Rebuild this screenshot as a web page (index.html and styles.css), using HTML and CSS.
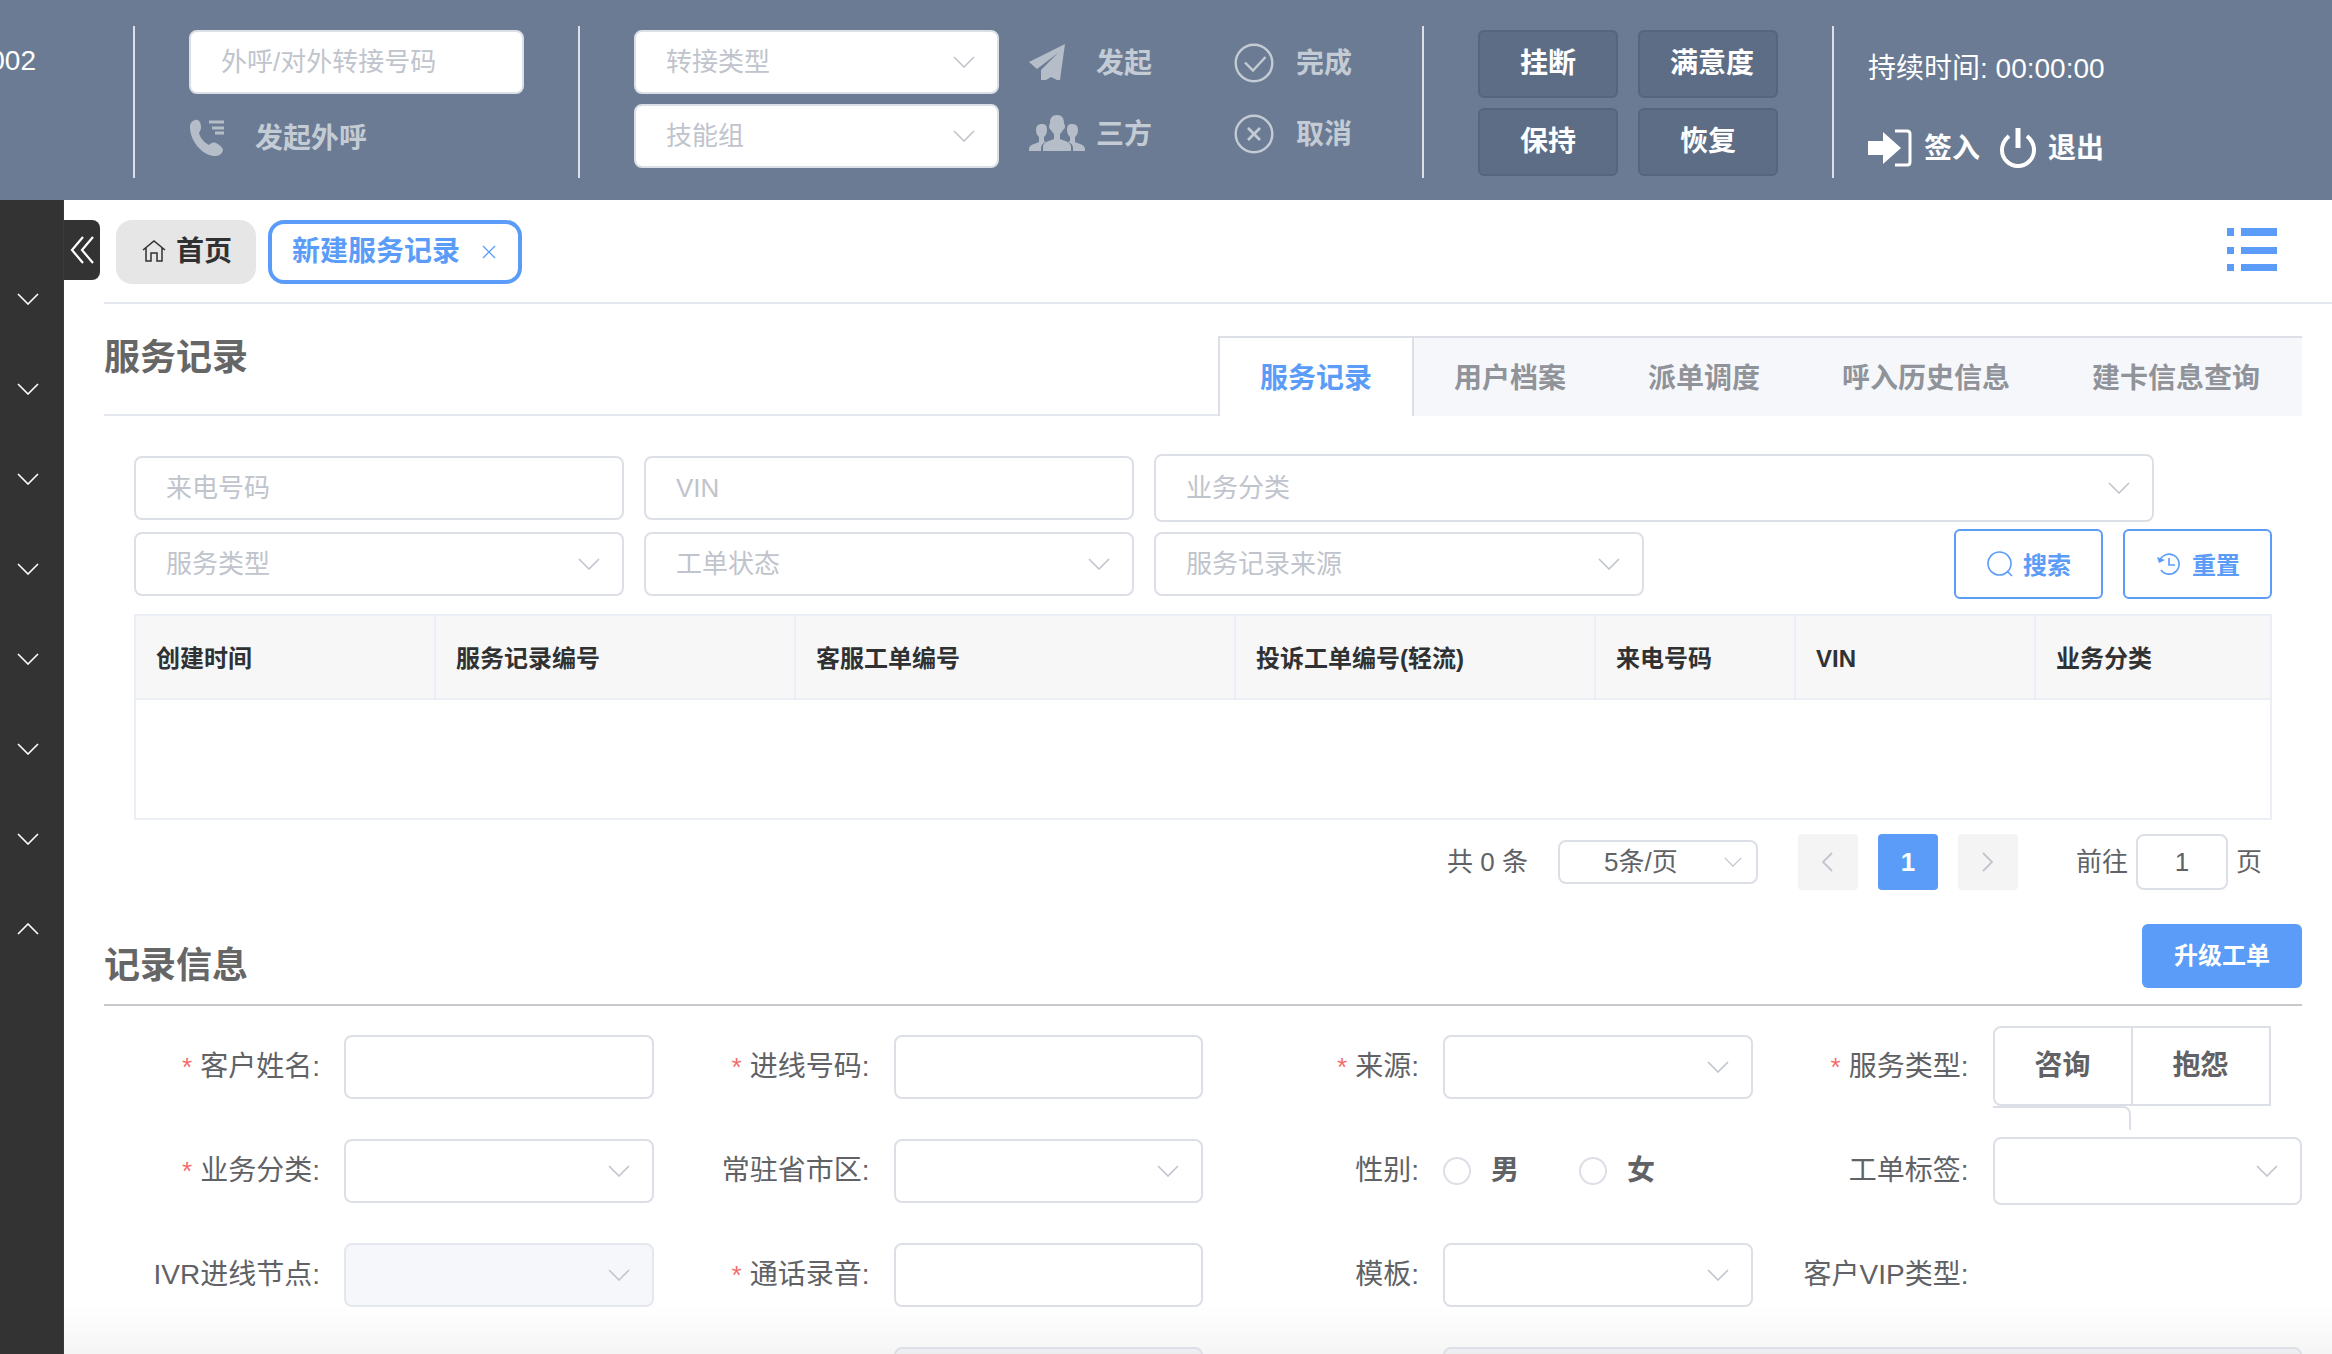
FILE: index.html
```html
<!DOCTYPE html>
<html lang="zh-CN">
<head>
<meta charset="utf-8">
<title>新建服务记录</title>
<link rel="stylesheet" href="styles.css">
</head>
<body>
<svg class="sprite" aria-hidden="true">
  <symbol id="caret" viewBox="0 0 22 12"><path d="M1 1l10 10L21 1" fill="none" stroke="currentColor" stroke-width="1.6"/></symbol>
</svg>

<header class="topbar">
  <div class="agent">002</div>
  <div class="divider"></div>
  <div class="outbound">
    <input class="field" type="text" placeholder="外呼/对外转接号码" aria-label="外呼/对外转接号码">
    <button class="action call" type="button">
      <svg width="36" height="38" viewBox="0 0 36 38"><path d="M6 1c4-1 6 3 6 7 0 3-1 4-2 6 1 5 6 10 10 12 2-2 4-3 7-2 4 2 7 5 7 7-1 5-5 6-9 6C13 36 1 22 1 8c0-4 2-6 5-7z" fill="currentColor"/><path d="M20 3h15M23 9h12M26 14h9" stroke="currentColor" stroke-width="3" fill="none"/></svg>
      <span>发起外呼</span>
    </button>
  </div>
  <div class="divider"></div>
  <div class="transfer">
    <div class="select"><select class="field placeholder" aria-label="转接类型"><option>转接类型</option></select><svg class="caret"><use href="#caret"/></svg></div>
    <div class="select"><select class="field placeholder" aria-label="技能组"><option>技能组</option></select><svg class="caret"><use href="#caret"/></svg></div>
  </div>
  <div class="actions">
    <button class="action wide" type="button">
      <svg width="56" height="40" viewBox="0 0 56 40"><path d="M36 1L31 37H28l-6-3-5 3H12V27L29 10 8 26 0 19z" fill="currentColor"/></svg>
      <span>发起</span>
    </button>
    <button class="action" type="button">
      <svg width="40" height="40" viewBox="0 0 40 40" fill="none" stroke="currentColor" stroke-width="2.4"><circle cx="20" cy="20" r="18.3"/><path d="M11 19.5l8 8L31.500 14"/></svg>
      <span>完成</span>
    </button>
    <button class="action wide" type="button">
      <svg width="56" height="40" viewBox="0 0 56 40" fill="currentColor"><path d="M28 1c5 0 7 3 7 8l1 3c0 3-1 3-2 4-1 2-2 3-3 4v5c5 2 11 3 11 8v4H14v-4c0-5 6-6 11-8v-5c-1-1-2-2-3-4-1-1-2-1-2-4l1-3c0-5 2-8 7-8z"/><path d="M13 10c4 0 5 2 5 6 0 3-1 5-3 7v4l2 1c-3 1-5 3-5 6v3H0v-2c0-4 5-5 10-7v-5c-2-2-3-4-3-7 0-4 2-6 6-6zM43 10c-4 0-5 2-5 6 0 3 1 5 3 7v4l-2 1c3 1 5 3 5 6v3h12v-2c0-4-5-5-10-7v-5c2-2 3-4 3-7 0-4-2-6-6-6z"/></svg>
      <span>三方</span>
    </button>
    <button class="action" type="button">
      <svg width="40" height="40" viewBox="0 0 40 40" fill="none" stroke="currentColor" stroke-width="2.4"><circle cx="20" cy="20" r="18.3"/><path d="M14 14l12 12M26 14L14 26" stroke-width="2.8"/></svg>
      <span>取消</span>
    </button>
  </div>
  <div class="divider"></div>
  <div class="controls">
    <button type="button">挂断</button>
    <button class="long-text" type="button">满意度</button>
    <button type="button">保持</button>
    <button type="button">恢复</button>
  </div>
  <div class="divider"></div>
  <div class="session">
    <div class="duration">持续时间: 00:00:00</div>
    <div class="session-actions">
      <button type="button">
        <svg width="44" height="40" viewBox="0 0 44 40"><path d="M0 13h15V4l18 16-18 16v-9H0z" fill="#fff"/><path d="M27 3h12q3 0 3 3v28q0 3-3 3H27" fill="none" stroke="#fff" stroke-width="3"/></svg>
        <span>签入</span>
      </button>
      <button type="button">
        <svg width="36" height="42" viewBox="0 0 36 42" fill="none" stroke="#fff"><path d="M9 9Q2 15 2 23a16 16 0 0 0 32 0q0-8-7-14" stroke-width="4"/><path d="M6 33q5 6 12 6t12-6" stroke-width="3"/><path d="M18 1v20" stroke-width="5"/></svg>
        <span>退出</span>
      </button>
    </div>
  </div>
</header>

<div class="layout">
  <nav class="sidebar" aria-label="主菜单">
    <button type="button" aria-label="展开"><svg class="caret"><use href="#caret"/></svg></button>
    <button type="button" aria-label="展开"><svg class="caret"><use href="#caret"/></svg></button>
    <button type="button" aria-label="展开"><svg class="caret"><use href="#caret"/></svg></button>
    <button type="button" aria-label="展开"><svg class="caret"><use href="#caret"/></svg></button>
    <button type="button" aria-label="展开"><svg class="caret"><use href="#caret"/></svg></button>
    <button type="button" aria-label="展开"><svg class="caret"><use href="#caret"/></svg></button>
    <button type="button" aria-label="展开"><svg class="caret"><use href="#caret"/></svg></button>
    <button type="button" aria-label="收起"><svg class="caret up"><use href="#caret"/></svg></button>
  </nav>

  <main class="main">
    <div class="tabbar">
      <button class="collapse" type="button" aria-label="收起菜单">
        <svg width="26" height="28" viewBox="0 0 26 28" fill="none" stroke="#fff" stroke-width="2.2"><path d="M14 1L3 14l11 13M24 1L13 14l11 13"/></svg>
      </button>
      <a class="tab home" href="#">
        <svg width="24" height="24" viewBox="0 0 24 24" fill="none" stroke="#303133" stroke-width="1.5"><path d="M1 10L12 1l11 9M4 8v13h5v-8h6v8h5V8"/></svg>
        <span>首页</span>
      </a>
      <a class="tab current" href="#">
        <span>新建服务记录</span>
        <svg width="14" height="14" viewBox="0 0 14 14" stroke="currentColor" stroke-width="1.3"><path d="M1 1l12 12M13 1L1 13"/></svg>
      </a>
      <button class="list" type="button" aria-label="列表">
        <svg width="50" height="44" viewBox="0 0 50 44" fill="#5a9cf8"><path d="M0 0h7v8H0zM14 0h36v8H14zM0 19h7v7H0zM14 19h36v7H14zM0 36h7v7H0zM14 36h36v7H14z"/></svg>
      </button>
    </div>

    <div class="page">
      <div class="section-head">
        <h2>服务记录</h2>
        <div class="cards" role="tablist">
          <button class="active" type="button" role="tab">服务记录</button>
          <button type="button" role="tab">用户档案</button>
          <button type="button" role="tab">派单调度</button>
          <button type="button" role="tab">呼入历史信息</button>
          <button type="button" role="tab">建卡信息查询</button>
        </div>
      </div>

      <section class="records">
        <div class="filters">
          <div class="filter-row">
            <input class="field" type="text" placeholder="来电号码" aria-label="来电号码">
            <input class="field" type="text" placeholder="VIN" aria-label="VIN">
            <div class="select long"><select class="field tall placeholder" aria-label="业务分类"><option>业务分类</option></select><svg class="caret"><use href="#caret"/></svg></div>
          </div>
          <div class="filter-row">
            <div class="select"><select class="field placeholder" aria-label="服务类型"><option>服务类型</option></select><svg class="caret"><use href="#caret"/></svg></div>
            <div class="select"><select class="field placeholder" aria-label="工单状态"><option>工单状态</option></select><svg class="caret"><use href="#caret"/></svg></div>
            <div class="select"><select class="field placeholder" aria-label="服务记录来源"><option>服务记录来源</option></select><svg class="caret"><use href="#caret"/></svg></div>
            <div class="buttons">
              <button class="outline" type="button">
                <svg width="26" height="26" viewBox="0 0 26 26" fill="none" stroke="currentColor" stroke-width="1.6"><circle cx="12.5" cy="12.5" r="11.5"/><path d="M20 20l5 5"/></svg>
                <span>搜索</span>
              </button>
              <button class="outline" type="button">
                <svg width="26" height="26" viewBox="0 0 26 26" fill="none" stroke="currentColor" stroke-width="1.6"><path d="M4 9a10 10 0 1 1 1 10M13 7v7h6"/><path d="M1 6l2 6 6-3z" fill="currentColor" stroke="none"/></svg>
                <span>重置</span>
              </button>
            </div>
          </div>
        </div>

        <table class="grid">
          <colgroup><col class="w300"><col class="w360"><col class="w440"><col class="w360"><col class="w200"><col class="w240"><col></colgroup>
          <thead><tr><th>创建时间</th><th>服务记录编号</th><th>客服工单编号</th><th>投诉工单编号(轻流)</th><th>来电号码</th><th>VIN</th><th>业务分类</th></tr></thead>
          <tbody><tr><td colspan="7"></td></tr></tbody>
        </table>

        <div class="pager">
          <span class="total">共 0 条</span>
          <div class="select"><select class="field size" aria-label="每页条数"><option>5条/页</option></select><svg class="caret"><use href="#caret"/></svg></div>
          <div class="pages">
            <button type="button" aria-label="上一页"><svg width="12" height="20" viewBox="0 0 12 20" fill="none" stroke="currentColor" stroke-width="1.8"><path d="M10 1L1 10l9 9"/></svg></button>
            <button class="on" type="button">1</button>
            <button type="button" aria-label="下一页"><svg width="12" height="20" viewBox="0 0 12 20" fill="none" stroke="currentColor" stroke-width="1.8"><path d="M1 1l9 9-9 9"/></svg></button>
          </div>
          <label class="jump">前往<input class="field" type="text" value="1">页</label>
        </div>
      </section>

      <div class="info-head">
        <h2>记录信息</h2>
        <button class="primary" type="button">升级工单</button>
      </div>

      <form class="form">
        <div class="item"><label class="required" for="name">客户姓名:</label><input class="field" id="name" type="text"></div>
        <div class="item"><label class="required" for="phone">进线号码:</label><input class="field" id="phone" type="text"></div>
        <div class="item"><label class="required" for="source">来源:</label><div class="select"><select class="field" id="source"></select><svg class="caret"><use href="#caret"/></svg></div></div>
        <div class="item"><span class="label required" id="kind">服务类型:</span>
          <div class="segmented" role="radiogroup" aria-labelledby="kind">
            <label><input type="radio" name="kind">咨询</label>
            <label><input type="radio" name="kind">抱怨</label>
            <span class="rest"></span>
          </div>
        </div>

        <div class="item"><label class="required" for="category">业务分类:</label><div class="select"><select class="field" id="category"></select><svg class="caret"><use href="#caret"/></svg></div></div>
        <div class="item"><label for="region">常驻省市区:</label><div class="select"><select class="field" id="region"></select><svg class="caret"><use href="#caret"/></svg></div></div>
        <div class="item"><span class="label" id="sex">性别:</span>
          <div class="radios" role="radiogroup" aria-labelledby="sex">
            <label><input type="radio" name="sex">男</label>
            <label><input type="radio" name="sex">女</label>
          </div>
        </div>
        <div class="item"><label for="tags">工单标签:</label><div class="select"><select class="field tall" id="tags"></select><svg class="caret"><use href="#caret"/></svg></div></div>

        <div class="item"><label for="ivr">IVR进线节点:</label><div class="select"><select class="field" id="ivr" disabled></select><svg class="caret"><use href="#caret"/></svg></div></div>
        <div class="item"><label class="required" for="audio">通话录音:</label><input class="field" id="audio" type="text"></div>
        <div class="item"><label for="template">模板:</label><div class="select"><select class="field" id="template"></select><svg class="caret"><use href="#caret"/></svg></div></div>
        <div class="item"><span class="label">客户VIP类型:</span></div>

        <div class="item second"><span class="label"></span><input class="field" type="text" disabled></div>
        <div class="item double"><span class="label"></span><input class="field" type="text" disabled></div>
      </form>
    </div>
    <div class="fade"></div>
  </main>
</div>
</body>
</html>
```
FILE: styles.css
```css
* { box-sizing: border-box; }

body {
  margin: 0;
  height: 100vh;
  display: flex;
  flex-direction: column;
  overflow: hidden;
  background: #fff;
  color: #606266;
  font: 28px/40px "Liberation Sans", "Noto Sans CJK SC", sans-serif;
}

button, input, select { font: inherit; color: inherit; margin: 0; }
button { padding: 0; border: 0; background: none; white-space: nowrap; }
a { color: inherit; text-decoration: none; }
svg { flex: none; display: block; }
h2 { margin: 0; font-size: 36px; line-height: 44px; font-weight: 700; color: #666; }
.sprite { position: absolute; width: 0; height: 0; }

/* Fields */
.field {
  width: 100%;
  min-width: 0;
  height: 64px;
  padding: 0 30px;
  border: 2px solid #dcdfe6;
  border-radius: 8px;
  background: #fff;
  color: #606266;
  font-size: 26px;
  appearance: none;
  outline: none;
}
.field.tall { height: 68px; }
.field::placeholder { color: #c0c4cc; opacity: 1; }
.field.placeholder { color: #c0c4cc; }
.field:disabled { background: #f5f7fa; border-color: #e4e7ed; opacity: 1; }
.select { display: grid; align-items: center; flex: 1; min-width: 0; }
.select > * { grid-area: 1 / 1; }
.caret { width: 22px; height: 12px; color: #c0c4cc; }
.select .caret { justify-self: end; margin-right: 24px; pointer-events: none; }

/* Top bar */
.topbar {
  flex: none;
  height: 200px;
  display: flex;
  align-items: flex-start;
  padding-top: 26px;
  background: #6b7b93;
  color: #fff;
}
.agent {
  width: 36px;
  margin: 15px 97px 0 0;
  display: flex;
  justify-content: flex-end;
  overflow: hidden;
}
.divider { flex: none; width: 2px; height: 152px; background: #dcdfe6; }
.outbound { width: 335px; margin: 4px 54px 0; display: flex; flex-direction: column; gap: 24px; }
.action { display: flex; align-items: center; gap: 22px; height: 40px; color: #c3cbd5; font-weight: 700; }
.action span, .session span { padding-top: 2px; }
.action svg { color: #b4bdc8; }
.action.call { gap: 30px; }
.action.wide { gap: 11px; }
.transfer { width: 365px; margin: 4px 0 0 54px; display: flex; flex-direction: column; gap: 10px; }
.actions {
  display: grid;
  grid-template-columns: 205px 118px;
  gap: 31px 0;
  margin: 17px 70px 0 30px;
}
.actions .action:nth-child(even) svg { color: #c3cbd5; }
.controls { display: grid; grid-template-columns: 140px 140px; gap: 10px 20px; margin: 4px 54px 0; }
.controls button {
  height: 68px;
  border: 2px solid #546580;
  border-radius: 6px;
  background: #5d6d86;
  color: #fff;
  font-weight: 700;
}
.controls .long-text { padding-left: 8px; }
.session { display: flex; flex-direction: column; gap: 39px; margin: 23px 0 0 34px; }
.session-actions { display: flex; gap: 20px; }
.session-actions button { display: flex; align-items: center; gap: 12px; height: 40px; font-weight: 700; }

/* Side menu */
.layout { flex: 1; min-height: 0; display: flex; }
.sidebar {
  flex: none;
  width: 64px;
  padding-top: 54px;
  display: flex;
  flex-direction: column;
  border-right: 1px solid #2b3a5e;
  background: #333;
}
.sidebar button { height: 90px; padding-left: 17px; }
.sidebar .caret { color: #fff; }
.up { transform: rotate(180deg); }

/* Open pages */
.main { flex: 1; min-width: 0; position: relative; overflow: hidden; }
.tabbar { display: flex; align-items: flex-start; height: 102px; padding: 20px 55px 0 0; }
.collapse {
  width: 36px;
  height: 60px;
  margin-right: 16px;
  display: flex;
  align-items: center;
  justify-content: center;
  border-radius: 0 8px 8px 0;
  background: #333;
}
.tab {
  height: 64px;
  display: flex;
  align-items: center;
  border-radius: 16px;
  font-weight: 700;
}
.home { gap: 10px; margin-right: 12px; padding: 0 24px 0 26px; background: #e6e6e6; color: #303133; }
.current { gap: 22px; padding: 0 22px 0 20px; border: 4px solid #5a9cf8; color: #5a9cf8; }
.list { margin: 8px 0 0 auto; }

/* Page */
.page { margin-left: 40px; padding-right: 30px; border-top: 2px solid #e4e7ed; }
.section-head { display: flex; padding-top: 32px; }
.section-head h2 { flex: 1; border-bottom: 2px solid #e4e7ed; }
.cards {
  display: flex;
  height: 80px;
  border-top: 2px solid #dcdfe6;
  border-left: 2px solid #dcdfe6;
  background: #f5f7fa;
}
.cards button { padding: 4px 40px 0; border-right: 2px solid transparent; color: #909399; font-weight: 700; }
.cards .active { background: #fff; border-right-color: #dcdfe6; color: #5a9cf8; }

.records { padding: 38px 30px 0; }
.filters { display: flex; flex-direction: column; gap: 7px; }
.filter-row { display: flex; align-items: center; gap: 20px; }
.filter-row > .field, .filter-row > .select { flex: 0 1 490px; }
.filter-row > .long { flex-basis: 1000px; }
.buttons { display: flex; gap: 20px; margin-left: auto; }
.outline {
  display: flex;
  align-items: center;
  gap: 10px;
  height: 70px;
  padding: 0 30px 0 31px;
  border: 2px solid #5a9cf8;
  border-radius: 6px;
  color: #5a9cf8;
  font-size: 24px;
  font-weight: 700;
}
.outline span { padding-top: 4px; }

.grid {
  width: 100%;
  margin-top: 15px;
  table-layout: fixed;
  border-collapse: separate;
  border-spacing: 0;
  border: 2px solid #ebeef5;
  border-width: 2px 0 0 2px;
}
.w200 { width: 200px; }
.w240 { width: 240px; }
.w300 { width: 300px; }
.w360 { width: 360px; }
.w440 { width: 440px; }
.grid th, .grid td { border: 2px solid #ebeef5; border-width: 0 2px 2px 0; }
.grid th {
  height: 84px;
  padding: 4px 20px 0;
  background: #f7f7f7;
  color: #303133;
  font-size: 24px;
  font-weight: 700;
  text-align: left;
}
.grid td { height: 120px; padding: 0; }

.pager {
  display: flex;
  align-items: center;
  justify-content: flex-end;
  margin-top: 14px;
  padding-right: 10px;
  font-size: 26px;
}
.pager .select { flex: none; width: 200px; margin: 0 40px 0 30px; }
.pager .size { height: 44px; padding-left: 44px; }
.pager .caret { width: 18px; height: 10px; margin-right: 16px; }
.pages { display: flex; gap: 20px; margin-right: 58px; }
.pages button {
  width: 60px;
  height: 56px;
  display: flex;
  align-items: center;
  justify-content: center;
  border-radius: 4px;
  background: #f4f4f5;
  color: #c0c4cc;
}
.pages .on { background: #5a9cf8; color: #fff; font-weight: 700; }
.jump { display: flex; align-items: center; gap: 8px; }
.jump .field { width: 92px; height: 56px; padding: 0; text-align: center; }

.info-head {
  display: flex;
  align-items: flex-start;
  justify-content: space-between;
  margin-top: 34px;
  padding-bottom: 16px;
  border-bottom: 2px solid #c8c9cc;
}
.info-head h2 { padding-top: 20px; }
.primary {
  width: 160px;
  height: 64px;
  border-radius: 6px;
  background: #5a9cf8;
  color: #fff;
  font-size: 24px;
  font-weight: 700;
}

/* Record form */
.form {
  display: grid;
  grid-template-columns: repeat(4, minmax(0, 1fr));
  grid-auto-rows: 64px;
  row-gap: 40px;
  margin-top: 29px;
}
.item { display: flex; align-items: center; }
.item > label, .label { flex: none; width: 240px; padding-right: 24px; text-align: right; white-space: nowrap; }
.required::before { content: "*"; margin-right: 8px; color: #f56c6c; font-size: 26px; }
.item > .field { flex: 1; }
.second { grid-column: 2; }
.double { grid-column: span 2; }

.segmented {
  align-self: flex-start;
  flex: 1;
  display: flex;
  flex-wrap: wrap;
  height: 104px;
  margin-top: -9px;
  overflow: hidden;
  color: #606266;
  font-weight: 700;
}
.segmented label, .rest {
  display: flex;
  align-items: center;
  justify-content: center;
  width: 138px;
  height: 80px;
  border: 2px solid #dcdfe6;
  border-left: 0;
}
.segmented label:first-child { width: 140px; border-left: 2px solid #dcdfe6; border-radius: 8px 0 0 8px; }
.segmented .rest { border-radius: 0 8px 8px 0; }
.segmented input { appearance: none; width: 0; }

.radios { display: flex; gap: 60px; font-weight: 700; }
.radios label { display: flex; align-items: center; gap: 20px; }
.radios input {
  appearance: none;
  width: 28px;
  height: 28px;
  border: 2px solid #dcdfe6;
  border-radius: 50%;
  background: #fff;
}

/* Soft shade along the bottom edge of the window */
.fade {
  position: absolute;
  inset: auto 0 0 0;
  height: 50px;
  background: linear-gradient(rgba(0, 0, 0, 0), rgba(0, 0, 0, 0.04));
  pointer-events: none;
}
```
